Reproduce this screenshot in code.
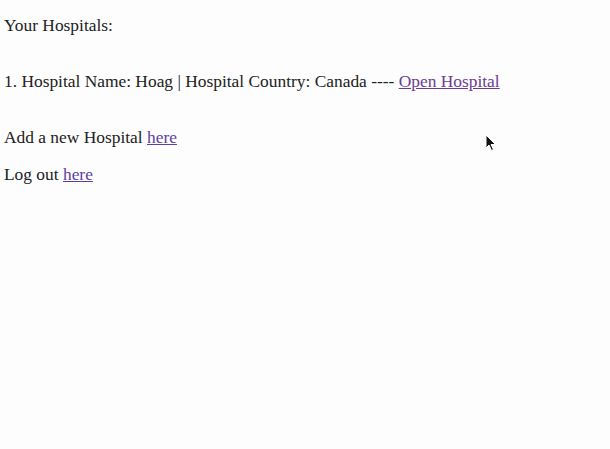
import React from "react";

const Cursor = () => (
  <svg
    className="absolute left-[485px] top-[134px]"
    width="12"
    height="18"
    viewBox="0 0 12 18"
  >
    <path
      d="M1 1 L1 14 L4 11 L6.5 16.5 L8.5 15.5 L6 10.5 L10.5 10.5 Z"
      fill="#111"
      stroke="#fff"
      strokeWidth="1"
    />
  </svg>
);

const App = () => {
  return (
    <div className="relative w-[610px] h-[449px] bg-[#fdfdfd] text-[#222] font-['Liberation_Serif',serif] text-[17.4px] px-[4px] pt-[16px]">
      <p className="leading-[18px]">Your Hospitals:</p>

      <div className="mt-[38px] leading-[18px]">
        1. Hospital Name: Hoag | Hospital Country: Canada ----{" "}
        <a href="#" className="underline text-[#6b3c93]">
          Open Hospital
        </a>
      </div>

      <p className="mt-[38px] leading-[18px]">
        Add a new Hospital{" "}
        <a href="#" className="underline text-[#5b3fa6]">
          here
        </a>
      </p>
      <p className="mt-[19px] leading-[18px]">
        Log out{" "}
        <a href="#" className="underline text-[#5b3fa6]">
          here
        </a>
      </p>

      <Cursor />
    </div>
  );
};

export default App;
